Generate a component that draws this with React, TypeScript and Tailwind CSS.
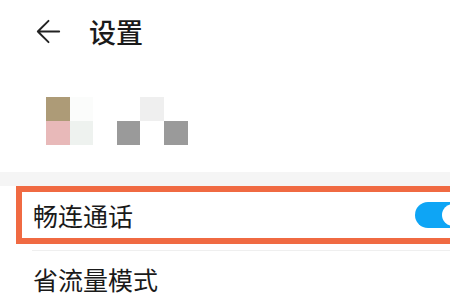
export default function App() {
  const font = { fontFamily: '"Noto Sans CJK SC", "Noto Sans", sans-serif' };
  const cells = [
    'bg-[#ad9b77]', 'bg-[#fbfcfb]', '', '', 'bg-[#efefef]', '',
    'bg-[#e8b9b9]', 'bg-[#eef2ef]', '', 'bg-[#9a9a9a]', '', 'bg-[#9a9a9a]',
  ];

  return (
    <div className="relative h-[300px] w-[450px] overflow-hidden bg-white text-[#1a1a1a]" style={font}>
      <header className="flex h-[62px] items-center pl-[35px]">
        <svg width="27" height="27" viewBox="0 0 24 24" fill="none" stroke="#222" strokeWidth="1.7" strokeLinecap="round" strokeLinejoin="round">
          <path d="M21.5 12H2.5M12 2.5L2.5 12l9.5 9.5" />
        </svg>
        <h1 className="ml-[27px] text-[27px] leading-none font-medium">设置</h1>
      </header>

      <div className="mt-[35px] ml-[46px] grid grid-cols-[repeat(6,23.6px)] grid-rows-[repeat(2,24px)]">
        {cells.map((c, i) => (
          <div key={i} className={c} />
        ))}
      </div>

      <div className="mt-[27px] h-[14px] bg-[#f5f5f5]" />

      <div className="ml-[16px] flex h-[58px] w-[460px] items-center border-[6px] border-[#f06a42] pl-[11px]">
        <span className="text-[25px] leading-none">畅连通话</span>
        <div className="ml-auto mr-[1px] flex h-[26px] w-[54px] items-center rounded-full bg-[#0ea5f5] pl-[27px]">
          <div className="h-[22px] w-[22px] rounded-full bg-white" />
        </div>
      </div>

      <div className="mt-[6px] ml-[32px] h-px bg-[#efefef]" />

      <div className="ml-[33px] mt-[16px] text-[25px] leading-none">省流量模式</div>
    </div>
  );
}
